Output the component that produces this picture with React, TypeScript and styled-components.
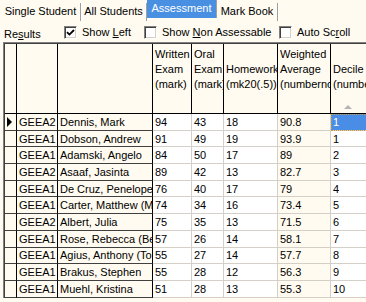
import styled, { createGlobalStyle, css } from "styled-components";

const GlobalStyle = createGlobalStyle`
  html, body {
    margin: 0;
    padding: 0;
    background: #fffbf0;
    overflow: hidden;
  }
  body {
    font-family: "Liberation Sans", Arial, sans-serif;
    font-size: 11px;
    color: #000;
  }
`;

type Tone = "fixed" | "plain" | "shade" | "current";

const tabs = [
  { label: "Single Student", width: 80 },
  { label: "All Students", width: 66 },
  { label: "Assessment", width: 70, active: true },
  { label: "Mark Book", width: 61 },
];

const headers = [
  { key: "ind", lines: [] as string[] },
  { key: "grp", lines: [] as string[] },
  { key: "name", lines: [] as string[] },
  { key: "written", lines: ["Written", "Exam", "(mark)"] },
  { key: "oral", lines: ["Oral", "Exam", "(mark)"] },
  { key: "hw", lines: ["Homework", "(mk20(.5))"] },
  { key: "wavg", lines: ["Weighted", "Average", "(numbernone)"] },
  { key: "decile", lines: ["Decile", "(number)"], sorted: true },
];

const students = [
  ["GEEA2", "Dennis, Mark", "94", "43", "18", "90.8", "1"],
  ["GEEA1", "Dobson, Andrew", "91", "49", "19", "93.9", "1"],
  ["GEEA1", "Adamski, Angelo", "84", "50", "17", "89", "2"],
  ["GEEA2", "Asaaf, Jasinta", "89", "42", "13", "82.7", "3"],
  ["GEEA1", "De Cruz, Penelope", "76", "40", "17", "79", "4"],
  ["GEEA1", "Carter, Matthew (Matt)", "74", "34", "16", "73.4", "5"],
  ["GEEA2", "Albert, Julia", "75", "35", "13", "71.5", "6"],
  ["GEEA1", "Rose, Rebecca (Becky)", "57", "26", "14", "58.1", "7"],
  ["GEEA1", "Agius, Anthony (Tony)", "55", "27", "14", "57.7", "8"],
  ["GEEA1", "Brakus, Stephen", "55", "28", "12", "56.3", "9"],
  ["GEEA1", "Muehl, Kristina", "51", "28", "13", "55.3", "10"],
];

const toneOf = (col: number, row: number): Tone => {
  if (col < 2) return "fixed";
  if (col === 6 && row === 0) return "current";
  if (col === 5) return "shade";
  return "plain";
};

const Check = () => (
  <svg width="9" height="9" viewBox="0 0 9 9">
    <path d="M1 4.2 L3.4 6.6 L8 2" fill="none" stroke="#000" strokeWidth="1.8" />
  </svg>
);

const App = () => {
  return (
    <Page>
      <GlobalStyle />
      <TabBar>
        {tabs.map((t) => (
          <Tab key={t.label} $active={t.active} $w={t.width}>
            {t.label}
          </Tab>
        ))}
      </TabBar>
      <OptionsRow>
        <ResultsLabel>
          Re<U>s</U>ults
        </ResultsLabel>
        <Option>
          <Box>
            <Check />
          </Box>
          <span>
            Show <U>L</U>eft
          </span>
        </Option>
        <Option>
          <Box />
          <span>
            Show <U>N</U>on Assessable
          </span>
        </Option>
        <Option>
          <Box />
          <span>
            Auto Sc<U>r</U>oll
          </span>
        </Option>
      </OptionsRow>
      <GridFrame>
        <Grid>
          {headers.map((h) => (
            <HeadCell key={h.key}>
              {h.lines.map((l) => (
                <span key={l}>{l}</span>
              ))}
              {h.sorted && <SortArrow />}
            </HeadCell>
          ))}
          {students.map((s, r) => (
            <Row key={s[1]}>
              <Cell $tone="fixed">{r === 0 && <Pointer />}</Cell>
              {s.map((v, c) => (
                <Cell key={c} $tone={toneOf(c, r)}>
                  {v}
                </Cell>
              ))}
            </Row>
          ))}
        </Grid>
      </GridFrame>
    </Page>
  );
};

export default App;

const Page = styled.div`
  width: 366px;
  height: 302px;
  overflow: hidden;
  background: #fffbf0;
`;

const TabBar = styled.div`
  display: flex;
  height: 21px;
  padding-left: 1px;
`;

const Tab = styled.div<{ $active?: boolean; $w: number }>`
  width: ${(p) => p.$w}px;
  box-sizing: border-box;
  text-align: center;
  white-space: nowrap;
  ${(p) =>
    p.$active
      ? css`
          height: 18px;
          line-height: 17px;
          background: #4a90e2;
          color: #fff;
          border-right: 1px solid #a0a0a0;
        `
      : css`
          height: 18px;
          margin-top: 3px;
          line-height: 17px;
          border-right: 1px solid #a0a0a0;
          box-shadow: 1px 0 0 #fff;
        `}
`;

const OptionsRow = styled.div`
  display: grid;
  grid-template-columns: 60px 80px 135px auto;
  align-items: center;
  height: 20px;
  padding: 1px 0 0 4px;
`;

const ResultsLabel = styled.div`
  padding-top: 4px;
`;

const U = styled.span`
  text-decoration: underline;
`;

const Option = styled.label`
  display: flex;
  align-items: center;
  gap: 5px;
  white-space: nowrap;
`;

const Box = styled.span`
  width: 13px;
  height: 13px;
  box-sizing: border-box;
  background: #fff;
  border: 1px solid;
  border-color: #808080 #fff #fff #808080;
  box-shadow: inset 1px 1px 0 #404040, inset -1px -1px 0 #d4d0c8;
  display: flex;
  align-items: center;
  justify-content: center;
`;

const GridFrame = styled.div`
  margin-left: 3px;
  border-top: 1px solid #808080;
  border-left: 1px solid #808080;
`;

const Grid = styled.div`
  display: grid;
  grid-template-columns: 12px 41px 95px 39px 32px 54px 53px 60px;
  grid-template-rows: 70px;
  grid-auto-rows: 16.7px;
  border-top: 1px solid #404040;
  border-left: 1px solid #404040;
`;

const Row = styled.div`
  display: contents;
`;

const HeadCell = styled.div`
  position: relative;
  box-sizing: border-box;
  background: #fffbf0;
  border-right: 1px solid #000;
  border-bottom: 1px solid #000;
  overflow: hidden;
  white-space: nowrap;
  display: flex;
  flex-direction: column;
  justify-content: flex-end;
  padding: 0 0 21px 2px;
  line-height: 15px;
`;

const SortArrow = styled.span`
  position: absolute;
  left: 13px;
  bottom: 4px;
  width: 0;
  height: 0;
  border-left: 4px solid transparent;
  border-right: 4px solid transparent;
  border-bottom: 4px solid #b4b4b4;
`;

const Cell = styled.div<{ $tone: Tone }>`
  box-sizing: border-box;
  overflow: hidden;
  white-space: nowrap;
  padding-left: 2px;
  display: flex;
  align-items: center;
  ${(p) =>
    p.$tone === "fixed"
      ? css`
          background: #fffbf0;
          border-right: 1px solid #000;
          border-bottom: 1px solid #404040;
        `
      : css`
          background: ${p.$tone === "shade" ? "#fffbf0" : p.$tone === "current" ? "#4a8de6" : "#fff"};
          color: ${p.$tone === "current" ? "#fff" : "#000"};
          border-right: 1px solid #d4d0c8;
          border-bottom: 1px solid #d4d0c8;
        `}
  ${(p) =>
    p.$tone === "current" &&
    css`
      outline: 1px dotted #c89a40;
      outline-offset: -1px;
    `}
`;

const Pointer = styled.span`
  width: 0;
  height: 0;
  border-left: 5px solid #000;
  border-top: 5px solid transparent;
  border-bottom: 5px solid transparent;
`;
